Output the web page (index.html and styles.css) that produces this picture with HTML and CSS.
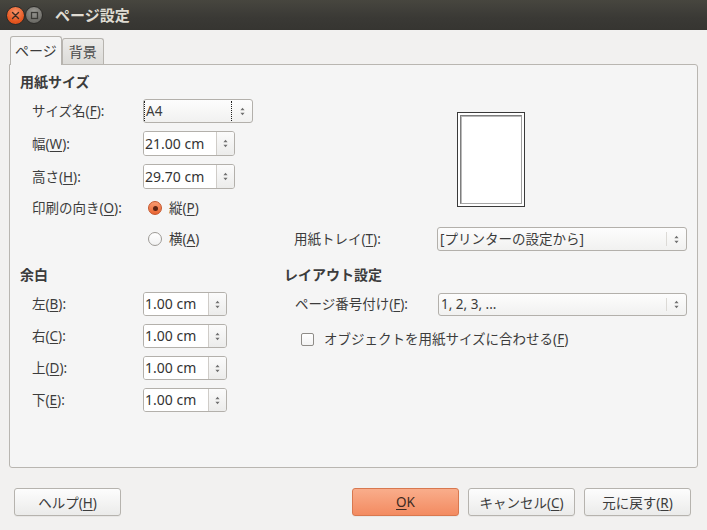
FILE: index.html
```html
<!DOCTYPE html>
<html lang="ja">
<head>
<meta charset="utf-8">
<title>ページ設定</title>
<link rel="stylesheet" href="styles.css">
</head>
<body>
<header class="titlebar">
  <span class="wbtn close"><svg width="9" height="9" viewBox="0 0 9 9"><path d="M1.5 1.5L7.5 7.5M7.5 1.5L1.5 7.5" stroke="#3a2a22" stroke-width="1.4" stroke-linecap="round"/></svg></span>
  <span class="wbtn max"><svg width="9" height="9" viewBox="0 0 9 9"><rect x="1.5" y="1.5" width="6" height="6" fill="none" stroke="#3b3a36" stroke-width="1.3"/></svg></span>
  <span class="title">ページ設定</span>
</header>
<main class="dialog">
  <nav class="tabs">
    <div class="tab active">ページ</div>
    <div class="tab">背景</div>
  </nav>
  <section class="panel">
    <h3 class="head">用紙サイズ</h3>

    <div class="lbl">サイズ名(<u>F</u>):</div>
    <div class="ctl">
      <div class="combo small">
        <span class="combo-text focus">A4</span>
        <span class="stepper"><svg width="7" height="11" viewBox="0 0 7 11"><path d="M3.5 1.8L1.4 4.2H5.6Z M1.4 6.8H5.6L3.5 9.2Z" fill="#707070"/></svg></span>
      </div>
    </div>
    <div class="preview"><div class="page"></div></div>

    <div class="lbl">幅(<u>W</u>):</div>
    <div class="ctl">
      <div class="spin wide tall"><span class="field">21.00 cm</span><span class="sbtn"><svg width="7" height="11" viewBox="0 0 7 11"><path d="M3.5 1.8L1.4 4.2H5.6Z M1.4 6.8H5.6L3.5 9.2Z" fill="#707070"/></svg></span></div>
    </div>

    <div class="lbl">高さ(<u>H</u>):</div>
    <div class="ctl">
      <div class="spin wide tall"><span class="field">29.70 cm</span><span class="sbtn"><svg width="7" height="11" viewBox="0 0 7 11"><path d="M3.5 1.8L1.4 4.2H5.6Z M1.4 6.8H5.6L3.5 9.2Z" fill="#707070"/></svg></span></div>
    </div>

    <div class="lbl">印刷の向き(<u>O</u>):</div>
    <div class="ctl radio-row"><span class="radio on"></span><span>縦(<u>P</u>)</span></div>

    <div class="ctl radio-row row6"><span class="radio"></span><span>横(<u>A</u>)</span></div>
    <div class="tray">
      <span class="rlbl">用紙トレイ(<u>T</u>):</span>
      <div class="combo grow">
        <span class="combo-text">[プリンターの設定から]</span>
        <span class="stepper sep"><svg width="7" height="11" viewBox="0 0 7 11"><path d="M3.5 1.8L1.4 4.2H5.6Z M1.4 6.8H5.6L3.5 9.2Z" fill="#707070"/></svg></span>
      </div>
    </div>

    <h3 class="head low">余白</h3>
    <h3 class="rhead">レイアウト設定</h3>

    <div class="lbl">左(<u>B</u>):</div>
    <div class="ctl">
      <div class="spin"><span class="field">1.00 cm</span><span class="sbtn"><svg width="7" height="11" viewBox="0 0 7 11"><path d="M3.5 1.8L1.4 4.2H5.6Z M1.4 6.8H5.6L3.5 9.2Z" fill="#707070"/></svg></span></div>
    </div>
    <div class="layout-row">
      <span class="rlbl">ページ番号付け(<u>F</u>):</span>
      <div class="combo grow short">
        <span class="combo-text">1, 2, 3, ...</span>
        <span class="stepper sep"><svg width="7" height="11" viewBox="0 0 7 11"><path d="M3.5 1.8L1.4 4.2H5.6Z M1.4 6.8H5.6L3.5 9.2Z" fill="#707070"/></svg></span>
      </div>
    </div>

    <div class="lbl">右(<u>C</u>):</div>
    <div class="ctl">
      <div class="spin"><span class="field">1.00 cm</span><span class="sbtn"><svg width="7" height="11" viewBox="0 0 7 11"><path d="M3.5 1.8L1.4 4.2H5.6Z M1.4 6.8H5.6L3.5 9.2Z" fill="#707070"/></svg></span></div>
    </div>
    <div class="check-row"><span class="checkbox"></span><span>オブジェクトを用紙サイズに合わせる(<u>F</u>)</span></div>

    <div class="lbl">上(<u>D</u>):</div>
    <div class="ctl">
      <div class="spin"><span class="field">1.00 cm</span><span class="sbtn"><svg width="7" height="11" viewBox="0 0 7 11"><path d="M3.5 1.8L1.4 4.2H5.6Z M1.4 6.8H5.6L3.5 9.2Z" fill="#707070"/></svg></span></div>
    </div>

    <div class="lbl">下(<u>E</u>):</div>
    <div class="ctl">
      <div class="spin"><span class="field">1.00 cm</span><span class="sbtn"><svg width="7" height="11" viewBox="0 0 7 11"><path d="M3.5 1.8L1.4 4.2H5.6Z M1.4 6.8H5.6L3.5 9.2Z" fill="#707070"/></svg></span></div>
    </div>
  </section>
  <footer class="buttons">
    <button class="btn">ヘルプ(<u>H</u>)</button>
    <span class="spacer"></span>
    <button class="btn ok"><u>O</u>K</button>
    <button class="btn">キャンセル(<u>C</u>)</button>
    <button class="btn">元に戻す(<u>R</u>)</button>
  </footer>
</main>
</body>
</html>
```

FILE: styles.css
```css
* { box-sizing: border-box; }
html, body { margin: 0; padding: 0; }
body {
  width: 707px;
  height: 530px;
  overflow: hidden;
  background: #f2f1f0;
  font-family: "Noto Sans", "Noto Sans CJK JP", sans-serif;
  font-size: 13.5px;
  line-height: 18px;
  color: #3c3c3c;
}
u { text-decoration: underline; text-underline-offset: 2px; text-decoration-thickness: 1px; }

/* title bar */
.titlebar {
  height: 30px;
  background: linear-gradient(#47463f, #3a3935 60%, #363531);
  display: flex;
  align-items: center;
  padding-left: 6px;
}
.wbtn {
  width: 19px;
  height: 19px;
  border-radius: 50%;
  display: flex;
  align-items: center;
  justify-content: center;
  border: 1px solid #2c2b28;
}
.close { background: radial-gradient(circle at 50% 30%, #f7936a, #e5561f 65%, #c9461a); }
.max { background: radial-gradient(circle at 50% 30%, #9a9994, #6f6e69 70%, #5d5c58); width: 18px; height: 18px; }
.title {
  margin-left: 12px;
  font-size: 15px;
  font-weight: bold;
  color: #dfdbd2;
}

/* tabs */
.tabs {
  display: flex;
  align-items: flex-end;
  margin: 6px 0 0 10px;
  height: 28px;
}
.tab {
  height: 26px;
  padding: 0 6px;
  border: 1px solid #b7b4af;
  border-bottom: none;
  border-radius: 3px 3px 0 0;
  background: linear-gradient(#ecebe9, #dcdbd8);
  display: flex;
  align-items: center;
  color: #4a4a4a;
  font-size: 14px;
}
.tab.active {
  height: 29px;
  margin-bottom: -1px;
  padding: 0 4px;
  background: #f5f5f5;
  position: relative;
  z-index: 1;
  color: #3c3c3c;
}

/* panel */
.panel {
  margin: 0 9px;
  height: 404px;
  border: 1px solid #b9b6b1;
  border-radius: 0 3px 3px 3px;
  background: #f5f5f5;
  padding: 8px 0 0 10px;
  display: grid;
  grid-template-columns: 12px 111px 141px 1fr;
  grid-template-rows: 18px 24px 25px 25px 22px 24px 25px 24px 24px 24px 24px;
  row-gap: 8px;
  align-items: center;
  align-content: start;
}
.head, .rhead {
  margin: 0;
  font-size: 14px;
  font-weight: bold;
  line-height: 18px;
  color: #3c3c3c;
}
.head { grid-column: 1 / 4; }
.head.low { align-self: end; }
.rhead { grid-column: 4; align-self: end; }
.lbl { grid-column: 2; }
.ctl { grid-column: 3; }
.row6 { grid-row: 6; }

/* combo box */
.combo {
  height: 24px;
  display: flex;
  align-items: stretch;
  border: 1px solid #b3b0ab;
  border-radius: 3px;
  background: linear-gradient(#fdfdfd, #f1f1f0);
}
.combo.small { width: 110px; }
.combo.short { height: 23px; }
.combo.grow { flex: 1; }
.combo-text {
  flex: 1;
  display: flex;
  align-items: center;
  padding-left: 2px;
}
.combo-text.focus {
  padding-left: 1px;
  border-left: 1px dotted #222;
  border-right: 1px dotted #222;
  margin: 1px 0;
}
.stepper {
  width: 20px;
  display: flex;
  align-items: center;
  justify-content: center;
}
.stepper.sep { border-left: 1px solid #dcdad6; margin: 4px 0; }

/* spin field */
.spin {
  width: 84px;
  height: 24px;
  display: flex;
  border: 1px solid #b3b0ab;
  border-radius: 3px;
  overflow: hidden;
}
.spin.wide { width: 92px; }
.spin.tall { height: 25px; }
.field {
  flex: 1;
  background: #fff;
  display: flex;
  align-items: center;
  padding-left: 1px;
  color: #333;
  font-size: 14px;
}
.sbtn {
  width: 18px;
  border-left: 1px solid #cfccc8;
  background: linear-gradient(#fbfbfb, #ececeb);
  display: flex;
  align-items: center;
  justify-content: center;
}

/* radio */
.radio-row {
  display: flex;
  align-items: center;
  gap: 7px;
  padding-left: 5px;
}
.radio {
  width: 14px;
  height: 14px;
  border-radius: 50%;
  border: 1px solid #9d9a96;
  background: linear-gradient(#ffffff, #f1f1f1);
  display: flex;
  align-items: center;
  justify-content: center;
}
.radio.on {
  border-color: #c4562c;
  background: linear-gradient(#f79a70, #ea6532);
}
.radio.on::after {
  content: "";
  width: 5px;
  height: 5px;
  border-radius: 50%;
  background: #5a2414;
}

/* right column */
.preview {
  grid-column: 4;
  grid-row: 2 / 6;
  justify-self: center;
  align-self: center;
  width: 68px;
  height: 95px;
  border: 1px solid #3a3a3a;
  padding: 2px;
  background: #fff;
}
.page {
  width: 100%;
  height: 100%;
  border: 1px solid #7d7d7d;
  border-right-color: #9f9f9f;
  border-bottom-color: #a6a6a6;
  box-shadow: inset 1px 1px 0 #b9b9b9;
  background: #fff;
}
.tray, .layout-row {
  grid-column: 4;
  display: flex;
  align-items: center;
  padding: 0 10px 0 10px;
}
.layout-row { padding-left: 11px; }
.rlbl { width: 143px; }
.check-row {
  grid-column: 4;
  display: flex;
  align-items: center;
  gap: 10px;
  padding-left: 17px;
  margin-top: 6px;
}
.checkbox {
  width: 13px;
  height: 13px;
  border: 1px solid #8f8c88;
  border-radius: 2px;
  background: linear-gradient(#ffffff, #f3f3f3);
}

/* buttons */
.buttons {
  display: flex;
  align-items: center;
  gap: 9px;
  margin-top: 20px;
  padding: 0 16px 0 14px;
}
.spacer { flex: 1; }
.btn {
  width: 107px;
  height: 28px;
  border: 1px solid #b6b3ae;
  border-radius: 3px;
  background: linear-gradient(#fdfdfd, #ebebea);
  font-family: "Noto Sans", "Noto Sans CJK JP", sans-serif;
  font-size: 13.5px;
  color: #3c3c3c;
  padding: 0;
  box-shadow: 0 1px 0 rgba(0,0,0,0.04);
}
.btn.ok {
  background: linear-gradient(#f9ad8b, #f38b61);
  border-color: #d8784f;
  color: #3d2a22;
}
```
